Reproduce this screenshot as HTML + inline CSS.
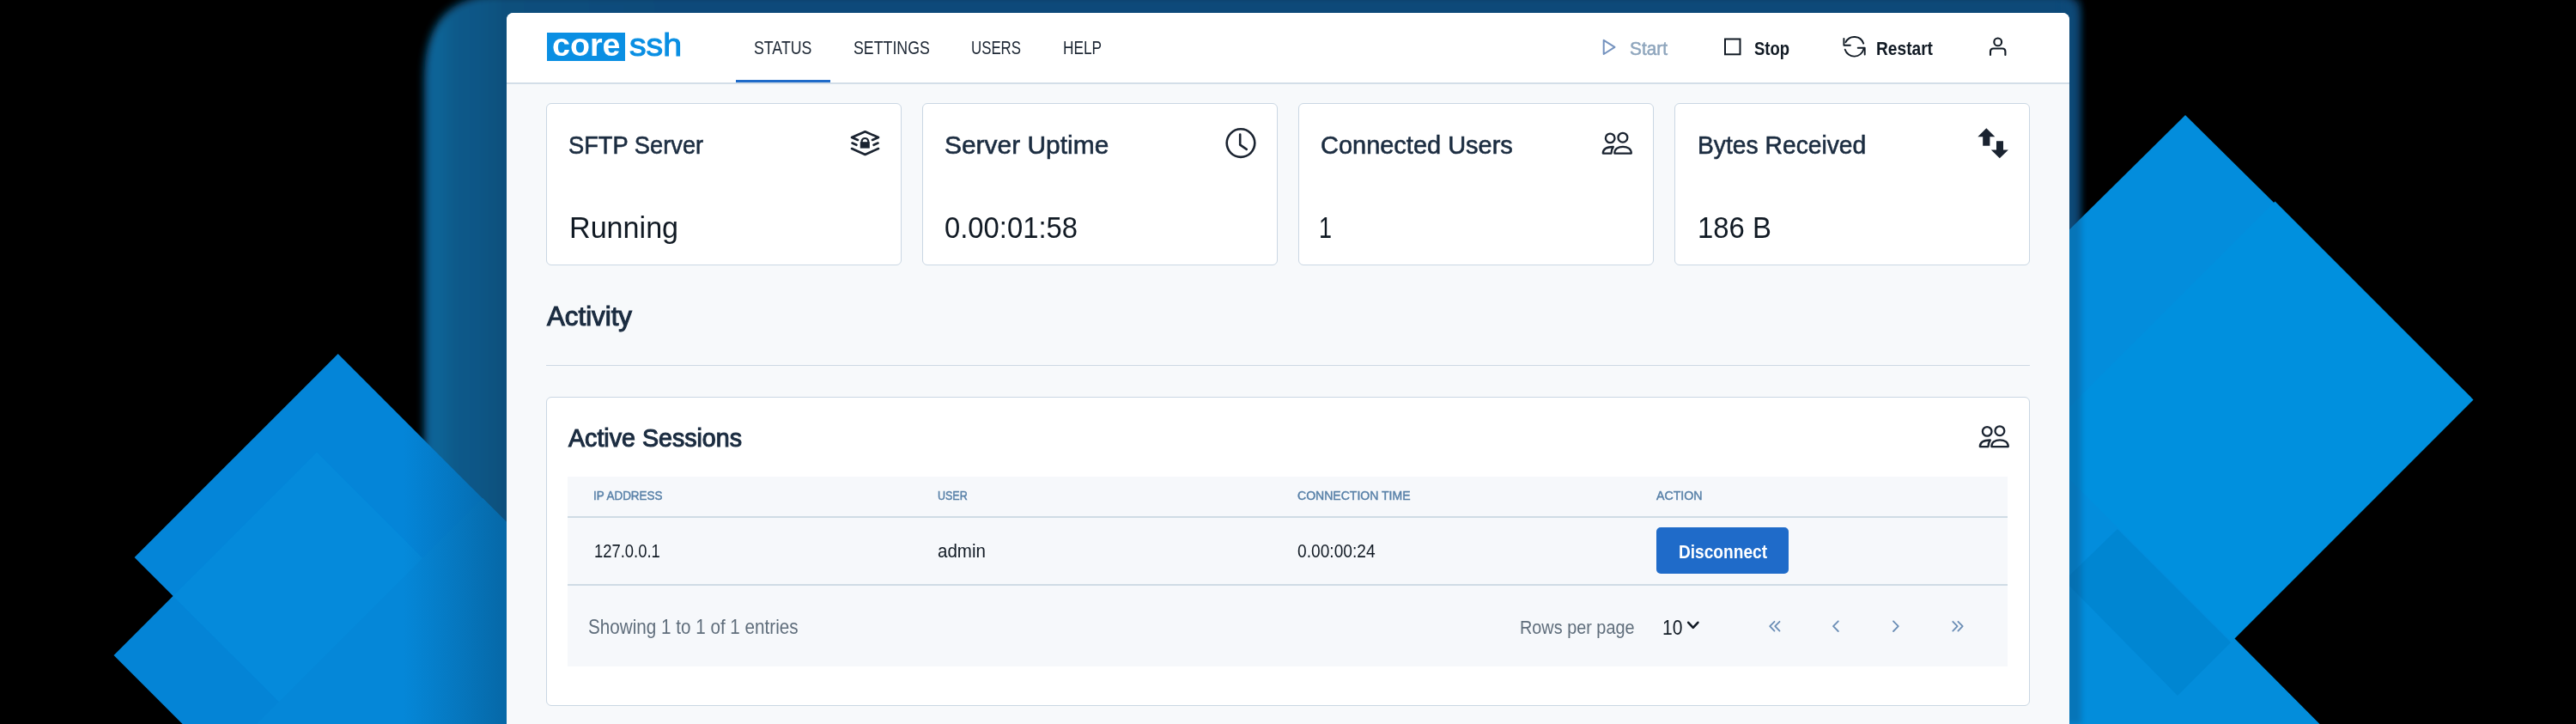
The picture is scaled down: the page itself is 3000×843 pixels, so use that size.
<!DOCTYPE html>
<html><head><meta charset="utf-8">
<style>
html,body{margin:0;padding:0;width:3000px;height:843px;overflow:hidden;background:#000;}
body{position:relative;font-family:"Liberation Sans",sans-serif;}
.abs{position:absolute;}
.tx{position:absolute;white-space:nowrap;line-height:normal;transform-origin:0 0;font-family:"Liberation Sans",sans-serif;}
#win{position:absolute;left:590px;top:15px;width:1820px;height:840px;background:#f7f9fb;border-radius:8px 8px 0 0;overflow:hidden;}
#hdr{position:absolute;left:590px;top:15px;width:1820px;height:81px;background:#fff;border-radius:8px 8px 0 0;border-bottom:2px solid #d3dee8;}
.card{position:absolute;background:#fff;border:1.7px solid #cad7e3;border-radius:6px;box-sizing:border-box;}
</style></head>
<body>
<svg class="abs" style="left:0;top:0" width="3000" height="843" viewBox="0 0 3000 843">
  <defs>
    <linearGradient id="gl" x1="490" y1="0" x2="2422" y2="0" gradientUnits="userSpaceOnUse">
      <stop offset="0" stop-color="#0b5e93"/>
      <stop offset="0.01" stop-color="#0b6598"/>
      <stop offset="0.02" stop-color="#0b5a8a"/>
      <stop offset="0.035" stop-color="#0b5686"/>
      <stop offset="0.052" stop-color="#0b4f7b"/>
      <stop offset="0.15" stop-color="#0d4a7a"/>
      <stop offset="1" stop-color="#0e4878"/>
    </linearGradient>
    <linearGradient id="ov" x1="470" y1="0" x2="590" y2="0" gradientUnits="userSpaceOnUse">
      <stop offset="0" stop-color="#08304f" stop-opacity="0"/>
      <stop offset="0.3" stop-color="#08304f" stop-opacity="0.1"/>
      <stop offset="1" stop-color="#08304f" stop-opacity="0.36"/>
    </linearGradient>
    <clipPath id="dclip">
      <polygon points="393.6,412 630.6,649 393.6,886 156.6,649"/>
      <polygon points="369,526.5 605.5,763 369,999.5 132.5,763"/>
      <polygon points="562,580 900,918 562,1256 224,918"/>
    </clipPath>
    <filter id="bl" x="-5%" y="-10%" width="110%" height="120%"><feGaussianBlur stdDeviation="5"/></filter>
    <filter id="bl2" x="-50%" y="-10%" width="200%" height="120%"><feGaussianBlur stdDeviation="3"/></filter>
  </defs>
  <rect width="3000" height="843" fill="#000"/>
  <!-- glow under -->
  <path d="M582,-6 L2398,-6 Q2422,-6 2422,18 L2422,900 L494,900 L494,92 Q494,-6 582,-6 Z" fill="url(#gl)" filter="url(#bl)"/>
  <!-- left diamonds -->
  <polygon points="393.6,412 630.6,649 393.6,886 156.6,649" fill="#0485d8"/>
  <polygon points="369,526.5 605.5,763 369,999.5 132.5,763" fill="#0484d6"/>
  <polygon points="369,526.5 561,718.5 393.6,886 201.5,694" fill="#058adb"/>
  <polygon points="562,580 900,918 562,1256 224,918" fill="#0587d8"/>
  <!-- right diamonds -->
  <polygon points="2380,560 2784,560 2601.5,742.5 2702,843.5 2380,843.5" fill="#038ddb"/>
  <polygon points="2545,134 2878,463 2545,796 2212,463" fill="#038ddc"/>
  <polygon points="2649.5,234.5 2880.5,465.5 2599,747 2368,516" fill="#0090de"/>
  <polygon points="2466,616 2598,748 2536,810 2404,676" fill="#0086d2"/>
  <!-- overlays -->
  <rect x="470" y="0" width="125" height="843" fill="url(#ov)" clip-path="url(#dclip)"/>
  <rect x="2400" y="0" width="24" height="843" fill="#0a4a78" opacity="0.35" filter="url(#bl2)"/>
</svg>
<div id="win"></div>
<div id="hdr"></div>
<!-- active tab underline -->
<div class="abs" style="left:857px;top:93px;width:110px;height:3px;background:#1f6bc9"></div>
<!-- logo box -->
<div class="abs" style="left:636.6px;top:37.9px;width:91.1px;height:33.2px;background:#0a8fe3"></div>
<!-- cards -->
<div class="card" style="left:636px;top:120px;width:414px;height:188.5px"></div>
<div class="card" style="left:1074px;top:120px;width:414px;height:188.5px"></div>
<div class="card" style="left:1512px;top:120px;width:414px;height:188.5px"></div>
<div class="card" style="left:1950px;top:120px;width:414px;height:188.5px"></div>
<!-- divider -->
<div class="abs" style="left:636px;top:424.5px;width:1728px;height:1.5px;background:#cdd9e4"></div>
<!-- sessions card -->
<div class="card" style="left:636px;top:462px;width:1728px;height:359.5px"></div>
<div class="abs" style="left:661px;top:555px;width:1677px;height:221px;background:#f6f8fb"></div>
<div class="abs" style="left:661px;top:601px;width:1677px;height:2px;background:#cfdbe5"></div>
<div class="abs" style="left:661px;top:680px;width:1677px;height:2px;background:#cfdbe5"></div>
<!-- button -->
<div class="abs" style="left:1929px;top:614px;width:154px;height:54px;background:#1f6bc9;border-radius:5px"></div>

<div class="tx" style="left:642.5px;top:31.3px;font-size:37.50px;font-weight:700;color:#ffffff;transform:scaleX(1.0036);">core</div>
<div class="tx" style="left:732.5px;top:30.5px;font-size:37.50px;font-weight:400;color:#0a8fe3;transform:scaleX(1.0452);-webkit-text-stroke:1.1px #0a8fe3;">ssh</div>
<div class="tx" style="left:878.0px;top:43.3px;font-size:22.03px;font-weight:400;color:#1c2633;transform:scaleX(0.8064);">STATUS</div>
<div class="tx" style="left:993.5px;top:43.3px;font-size:22.03px;font-weight:400;color:#1c2633;transform:scaleX(0.8066);">SETTINGS</div>
<div class="tx" style="left:1131.2px;top:43.3px;font-size:22.03px;font-weight:400;color:#1c2633;transform:scaleX(0.7646);">USERS</div>
<div class="tx" style="left:1238.1px;top:43.3px;font-size:22.03px;font-weight:400;color:#1c2633;transform:scaleX(0.7841);">HELP</div>
<div class="tx" style="left:1898.0px;top:43.9px;font-size:21.59px;font-weight:400;color:#8fa6bd;transform:scaleX(0.9654);-webkit-text-stroke:0.5px #8fa6bd;">Start</div>
<div class="tx" style="left:2043.0px;top:43.9px;font-size:21.59px;font-weight:700;color:#111a24;transform:scaleX(0.8550);">Stop</div>
<div class="tx" style="left:2185.0px;top:43.9px;font-size:21.59px;font-weight:700;color:#111a24;transform:scaleX(0.8876);">Restart</div>
<div class="tx" style="left:662.0px;top:151.9px;font-size:29.42px;font-weight:400;color:#1b2c40;transform:scaleX(0.9279);-webkit-text-stroke:0.6px #1b2c40;">SFTP Server</div>
<div class="tx" style="left:1099.7px;top:151.9px;font-size:29.42px;font-weight:400;color:#1b2c40;transform:scaleX(1.0179);-webkit-text-stroke:0.6px #1b2c40;">Server Uptime</div>
<div class="tx" style="left:1538.0px;top:151.9px;font-size:29.42px;font-weight:400;color:#1b2c40;transform:scaleX(0.9850);-webkit-text-stroke:0.6px #1b2c40;">Connected Users</div>
<div class="tx" style="left:1976.5px;top:151.9px;font-size:29.42px;font-weight:400;color:#1b2c40;transform:scaleX(0.9608);-webkit-text-stroke:0.6px #1b2c40;">Bytes Received</div>
<div class="tx" style="left:663.0px;top:245.2px;font-size:35.65px;font-weight:400;color:#111a24;transform:scaleX(0.9573);">Running</div>
<div class="tx" style="left:1099.7px;top:245.2px;font-size:35.65px;font-weight:400;color:#111a24;transform:scaleX(0.9201);">0.00:01:58</div>
<div class="tx" style="left:1536.0px;top:245.2px;font-size:35.65px;font-weight:400;color:#111a24;transform:scaleX(0.7565);">1</div>
<div class="tx" style="left:1976.5px;top:245.2px;font-size:35.65px;font-weight:400;color:#111a24;transform:scaleX(0.9233);">186 B</div>
<div class="tx" style="left:637.0px;top:351.0px;font-size:30.43px;font-weight:400;color:#1b2c40;transform:scaleX(1.0274);-webkit-text-stroke:1.1px #1b2c40;">Activity</div>
<div class="tx" style="left:662.0px;top:493.8px;font-size:28.99px;font-weight:400;color:#1b2c40;transform:scaleX(0.9873);-webkit-text-stroke:1.1px #1b2c40;">Active Sessions</div>
<div class="tx" style="left:691.0px;top:569.4px;font-size:14.49px;font-weight:400;color:#5880a8;transform:scaleX(0.9286);-webkit-text-stroke:0.45px #5880a8;">IP ADDRESS</div>
<div class="tx" style="left:1092.3px;top:569.4px;font-size:14.49px;font-weight:400;color:#5880a8;transform:scaleX(0.8621);-webkit-text-stroke:0.45px #5880a8;">USER</div>
<div class="tx" style="left:1511.0px;top:569.4px;font-size:14.49px;font-weight:400;color:#5880a8;transform:scaleX(0.9695);-webkit-text-stroke:0.45px #5880a8;">CONNECTION TIME</div>
<div class="tx" style="left:1929.4px;top:569.4px;font-size:14.49px;font-weight:400;color:#5880a8;transform:scaleX(0.9793);-webkit-text-stroke:0.45px #5880a8;">ACTION</div>
<div class="tx" style="left:692.0px;top:629.6px;font-size:21.45px;font-weight:400;color:#111a24;transform:scaleX(0.8590);">127.0.0.1</div>
<div class="tx" style="left:1092.3px;top:629.6px;font-size:21.45px;font-weight:400;color:#111a24;transform:scaleX(0.9573);">admin</div>
<div class="tx" style="left:1511.0px;top:629.6px;font-size:21.45px;font-weight:400;color:#111a24;transform:scaleX(0.8941);">0.00:00:24</div>
<div class="tx" style="left:1955.0px;top:629.6px;font-size:21.74px;font-weight:700;color:#ffffff;transform:scaleX(0.8792);">Disconnect</div>
<div class="tx" style="left:685.0px;top:717.3px;font-size:23.19px;font-weight:400;color:#5f6d7b;transform:scaleX(0.8909);">Showing 1 to 1 of 1 entries</div>
<div class="tx" style="left:1770.0px;top:718.6px;font-size:21.45px;font-weight:400;color:#5f6d7b;transform:scaleX(0.9258);">Rows per page</div>
<div class="tx" style="left:1935.5px;top:716.7px;font-size:23.91px;font-weight:400;color:#111a24;transform:scaleX(0.8837);">10</div>

<svg class="abs" style="left:0;top:0;pointer-events:none" width="3000" height="843" viewBox="0 0 3000 843" fill="none" stroke-linecap="round" stroke-linejoin="round">
  <!-- play -->
  <polygon points="1867.7,46.8 1867.7,63 1880.5,54.9" stroke="#7593bf" stroke-width="2"/>
  <!-- stop -->
  <rect x="2009" y="45.5" width="17.5" height="17.8" stroke="#111a24" stroke-width="2" stroke-linejoin="miter"/>
  <!-- restart -->
  <g stroke="#111a24" stroke-width="1.9">
    <path d="M2149.45,49.14 A11.3,11.3 0 0 1 2170.2,50.66"/>
    <path d="M2147.4,45 L2147.4,52.7 L2154.9,52.7"/>
    <path d="M2148.73,57.72 A11.3,11.3 0 0 0 2170.45,57.09"/>
    <path d="M2163.7,55.7 L2171.7,55.7 L2171.7,63.5"/>
  </g>
  <!-- user -->
  <g stroke="#111a24" stroke-width="2.1">
    <circle cx="2326.7" cy="48.9" r="4.4"/>
    <path d="M2318,64 L2318,60 Q2318,56.5 2321.5,56.5 L2332,56.5 Q2335.4,56.5 2335.4,60 L2335.4,64"/>
  </g>
  <!-- sftp icon -->
  <g stroke="#1a2330" stroke-width="2.6">
    <path d="M999,163 L992,160 L1007.5,153.2 L1023,160 L1016,163"/>
    <path d="M992.5,166.5 L997.5,168.8"/>
    <path d="M1017.5,168.8 L1022.5,166.5"/>
    <path d="M992,173 L1007.5,180 L1023,173"/>
    <path d="M1003.6,166 L1003.6,164 A3.9,3.9 0 0 1 1011.2,164 L1011.2,166" stroke-width="2.2"/>
  </g>
  <rect x="1001.8" y="165.2" width="11" height="7.4" fill="#1a2330"/>
  <!-- clock -->
  <g stroke="#1a2330" stroke-width="2.6">
    <circle cx="1445" cy="166.6" r="16.3"/>
    <path d="M1444.2,156.6 L1444.2,168.7 L1451.8,173.8"/>
  </g>
  <!-- users -->
  <g id="usr" stroke="#1a2330" stroke-width="2.3">
    <circle cx="1875.2" cy="160.9" r="5.3"/>
    <circle cx="1889.9" cy="160.2" r="5.4"/>
    <path d="M1880.3,178.6 C1880.3,173.2 1884.6,170.8 1890,170.8 C1895.4,170.8 1899.8,173.2 1899.8,178.6 Z"/>
    <path d="M1866.8,178.6 C1866.8,174 1870,171 1878.8,171 C1877,173.5 1876.5,176 1876.5,178.6 Z"/>
  </g>
  <use href="#usr" transform="translate(439,341.5)"/>
  <!-- arrows -->
  <polygon points="2313.3,149.3 2323.3,159.3 2317.4,159.3 2317.4,169.7 2309.2,169.7 2309.2,159.3 2303.3,159.3" fill="#1a2330" stroke="none"/>
  <polygon points="2325,164.2 2333,164.2 2333,174.5 2338.9,174.5 2328.8,184.2 2318.8,174.5 2325,174.5" fill="#1a2330" stroke="none"/>
  <!-- dropdown chevron -->
  <path d="M1966.2,724.8 L1971.8,730.8 L1977.4,724.8" stroke="#111a24" stroke-width="2.6"/>
  <!-- pagination -->
  <g stroke="#6a8db5" stroke-width="1.8">
    <path d="M2066.5,723.8 L2061.2,729.2 L2066.5,734.6 M2072.5,723.8 L2067.2,729.2 L2072.5,734.6"/>
    <path d="M2140.8,723.3 L2135,729.2 L2140.8,735"/>
    <path d="M2205,723.3 L2210.8,729.2 L2205,735"/>
    <path d="M2274.3,723.8 L2279.6,729.2 L2274.3,734.6 M2280.4,723.8 L2285.7,729.2 L2280.4,734.6"/>
  </g>
</svg>
</body></html>
